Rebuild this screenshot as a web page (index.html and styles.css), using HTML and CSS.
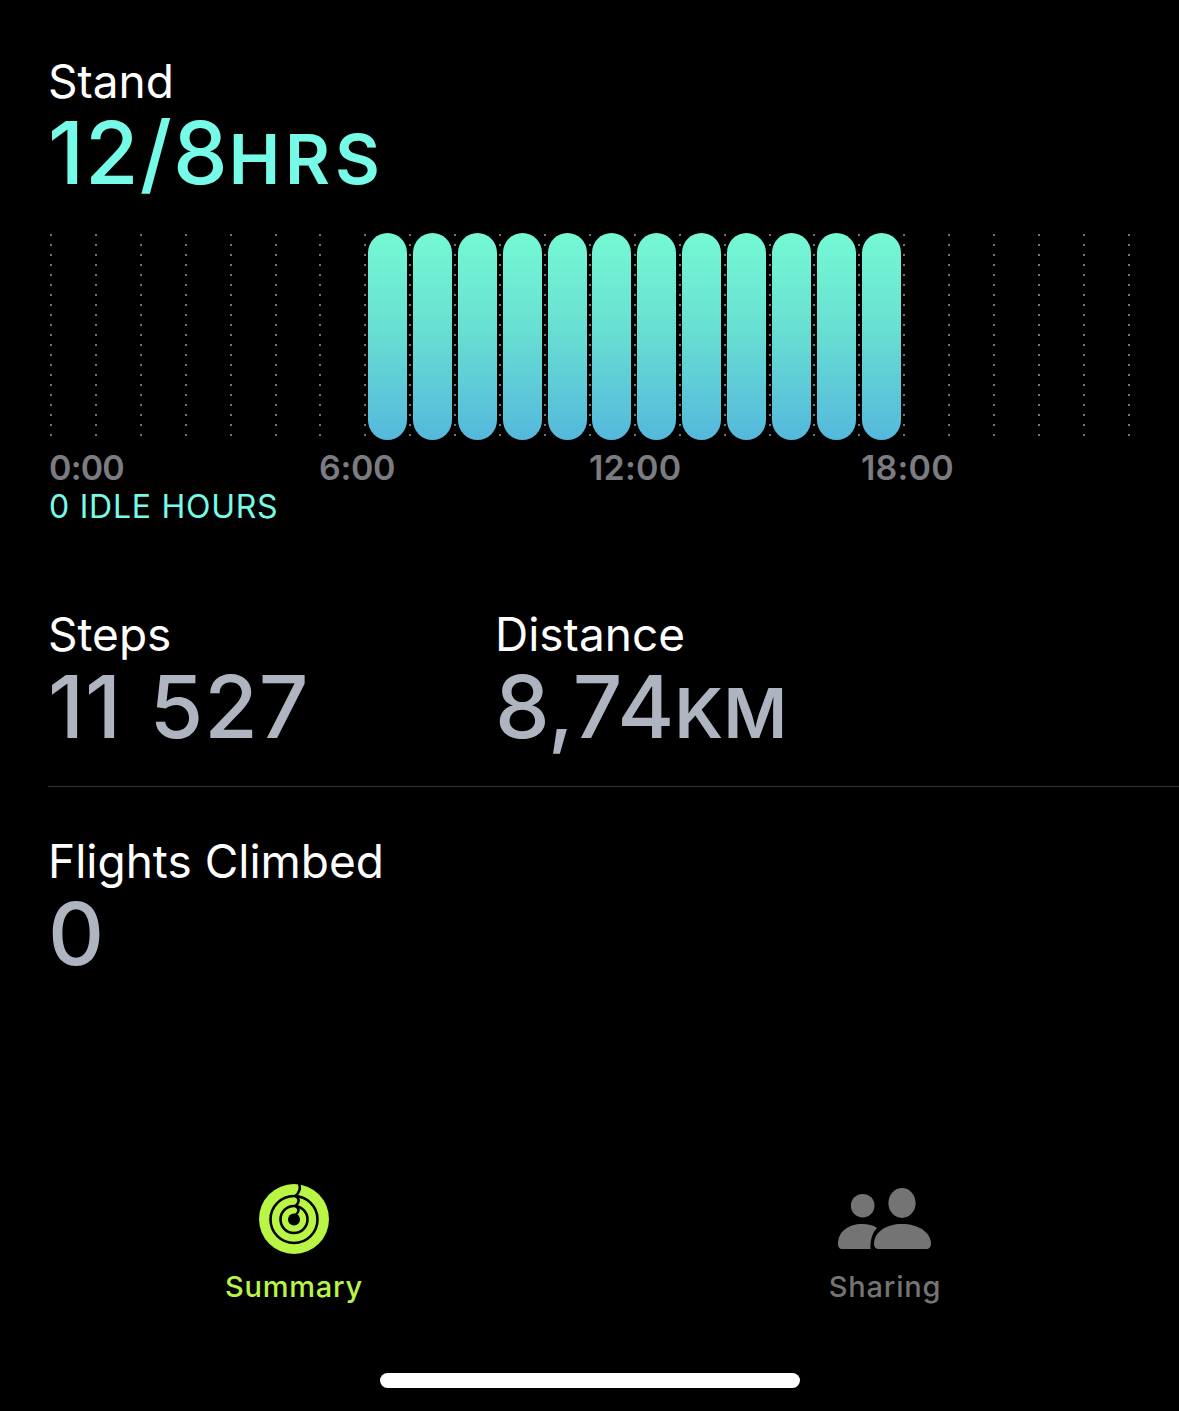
FILE: index.html
```html
<!DOCTYPE html>
<html lang="en">
<head>
<meta charset="utf-8">
<title>Activity</title>
<link rel="stylesheet" href="styles.css">
</head>
<body>
<main class="screen">
  <section class="stand">
    <h2 class="label">Stand</h2>
    <div class="value value-stand">12/8<span class="unit unit-hrs">HRS</span></div>
    <div class="chart">
      <div class="grid-lines">
        <i></i><i></i><i></i><i></i><i></i><i></i><i></i><i></i><i></i><i></i><i></i><i></i><i></i>
        <i></i><i></i><i></i><i></i><i></i><i></i><i></i><i></i><i></i><i></i><i></i><i></i>
      </div>
      <div class="bars">
        <b></b><b></b><b></b><b></b><b></b><b></b><b></b><b></b><b></b><b></b><b></b><b></b>
      </div>
    </div>
    <div class="axis">
      <span class="tick tick-0">0:00</span>
      <span class="tick tick-6">6:00</span>
      <span class="tick tick-12">12:00</span>
      <span class="tick tick-18">18:00</span>
    </div>
    <div class="idle">0 IDLE HOURS</div>
  </section>

  <section class="stats">
    <div class="stat">
      <h2 class="label">Steps</h2>
      <div class="value value-grey value-steps">11 527</div>
    </div>
    <div class="stat">
      <h2 class="label">Distance</h2>
      <div class="value value-grey value-dist">8,74<span class="unit unit-km">KM</span></div>
    </div>
  </section>

  <hr class="divider">

  <section class="flights">
    <h2 class="label">Flights Climbed</h2>
    <div class="value value-grey">0</div>
  </section>

  <nav class="tabbar">
    <div class="tab tab-active">
      <svg class="tab-icon" width="70" height="70" viewBox="0 0 70 70">
        <circle cx="35" cy="35" r="35" fill="#b9f545"/>
        <circle cx="35" cy="35.500" r="23.500" fill="none" stroke="#000" stroke-width="2.6"/>
        <circle cx="35" cy="35.500" r="13.500" fill="none" stroke="#000" stroke-width="2.6"/>
        <circle cx="35" cy="35.500" r="6" fill="#000"/>
        <path d="M40 0C42 4 40 9 36.500 12C41 15 40.500 18 36.500 22C41 25 40 28 36.500 31" fill="none" stroke="#000" stroke-width="2.6"/>
      </svg>
      <span class="tab-label">Summary</span>
    </div>
    <div class="tab">
      <svg class="tab-icon" width="94" height="64" viewBox="0 0 94 64">
        <circle cx="24.700" cy="18.700" r="11.800" fill="#747474"/>
        <ellipse cx="64" cy="16" rx="13.600" ry="15" fill="#747474"/>
        <path d="M0 57C0 44 11 37 24 37C30 37 35 38 39 41C35 45 32 52 32.500 62H4C1.500 62 0 60 0 57Z" fill="#747474"/>
        <path d="M36 57C36 45 48 37 64 37C80 37 93 45 93 57C93 60 91 62 88 62H41C38 62 36 60 36 57Z" fill="#747474"/>
      </svg>
      <span class="tab-label">Sharing</span>
    </div>
  </nav>
  <div class="home-indicator"></div>
</main>
</body>
</html>
```
FILE: styles.css
```css
* { box-sizing: border-box; }
html, body { margin: 0; padding: 0; background: #000; }
.screen {
  width: 1179px;
  height: 1411px;
  overflow: hidden;
  background: #000;
  display: flex;
  flex-direction: column;
  font-family: Inter, "Liberation Sans", sans-serif;
  color: #fff;
}
.stand { padding: 55px 0 0 48px; }
.label {
  margin: 0;
  font-size: 46px;
  line-height: 52px;
  font-weight: 400;
  color: #fff;
}
.value {
  font-size: 87px;
  line-height: 84px;
  font-weight: 500;
  letter-spacing: 1px;
}
.value-stand { color: #76fbe8; margin-top: 4px; }
.value-grey { color: #aeb4c0; margin-top: 5px; }
.value-steps { word-spacing: 3px; }
.value-dist { letter-spacing: 0; }
.unit { font-size: 69px; font-weight: 600; }
.unit-hrs { letter-spacing: 5px; }
.unit-km { letter-spacing: 0.5px; }
.chart { position: relative; width: 1082px; height: 208px; margin-top: 32px; }
.grid-lines {
  position: absolute;
  left: 2px;
  top: 1px;
  width: 1080px;
  height: 202px;
  display: flex;
  justify-content: space-between;
}
.grid-lines i {
  display: block;
  width: 2px;
  height: 100%;
  background: repeating-linear-gradient(180deg, #747474 0 2px, transparent 2px 10px);
}
.bars {
  position: absolute;
  left: 320px;
  top: 0;
  display: flex;
  gap: 5.9px;
  height: 207px;
}
.bars b {
  display: block;
  width: 39px;
  height: 100%;
  border-radius: 19.5px / 20px;
  background: linear-gradient(180deg, #75f9d4 0%, #69e0d2 45%, #55b8dc 100%);
}
.axis { position: relative; height: 36px; margin-top: 9px; }
.tick {
  position: absolute;
  top: 0;
  font-size: 34px;
  line-height: 36px;
  font-weight: 600;
  color: #7c7c80;
  letter-spacing: 0.2px;
}
.tick-0 { left: 1px; letter-spacing: -0.8px; }
.tick-6 { left: 271px; letter-spacing: -0.3px; }
.tick-12 { left: 541px; }
.tick-18 { left: 813px; }
.idle {
  font-size: 32px;
  line-height: 38px;
  color: #76fbe8;
  letter-spacing: 0.75px;
  margin-top: 2px;
  padding-left: 1px;
}
.stats { display: flex; padding: 82px 0 0 48px; }
.stat { width: 447px; }
.divider {
  height: 1px;
  border: 0;
  background: #333336;
  margin: 31px 0 0 48px;
  width: 1131px;
}
.flights { padding: 48px 0 0 48px; }
.tabbar {
  position: absolute;
  left: 0;
  top: 1184px;
  width: 1179px;
  display: flex;
  justify-content: space-between;
  padding: 0 224px;
}
.tab {
  display: flex;
  flex-direction: column;
  align-items: center;
  gap: 15px;
  color: #747474;
  width: 140px;
  height: 120px;
}
.tab-icon { display: block; height: 70px; flex: none; }
.tab-label { font-size: 29px; line-height: 36px; font-weight: 500; letter-spacing: 0.8px; }
.tab-active { color: #b9f545; }
.home-indicator {
  position: absolute;
  left: 380px;
  top: 1373px;
  width: 420px;
  height: 15px;
  border-radius: 8px;
  background: #fff;
}
```
